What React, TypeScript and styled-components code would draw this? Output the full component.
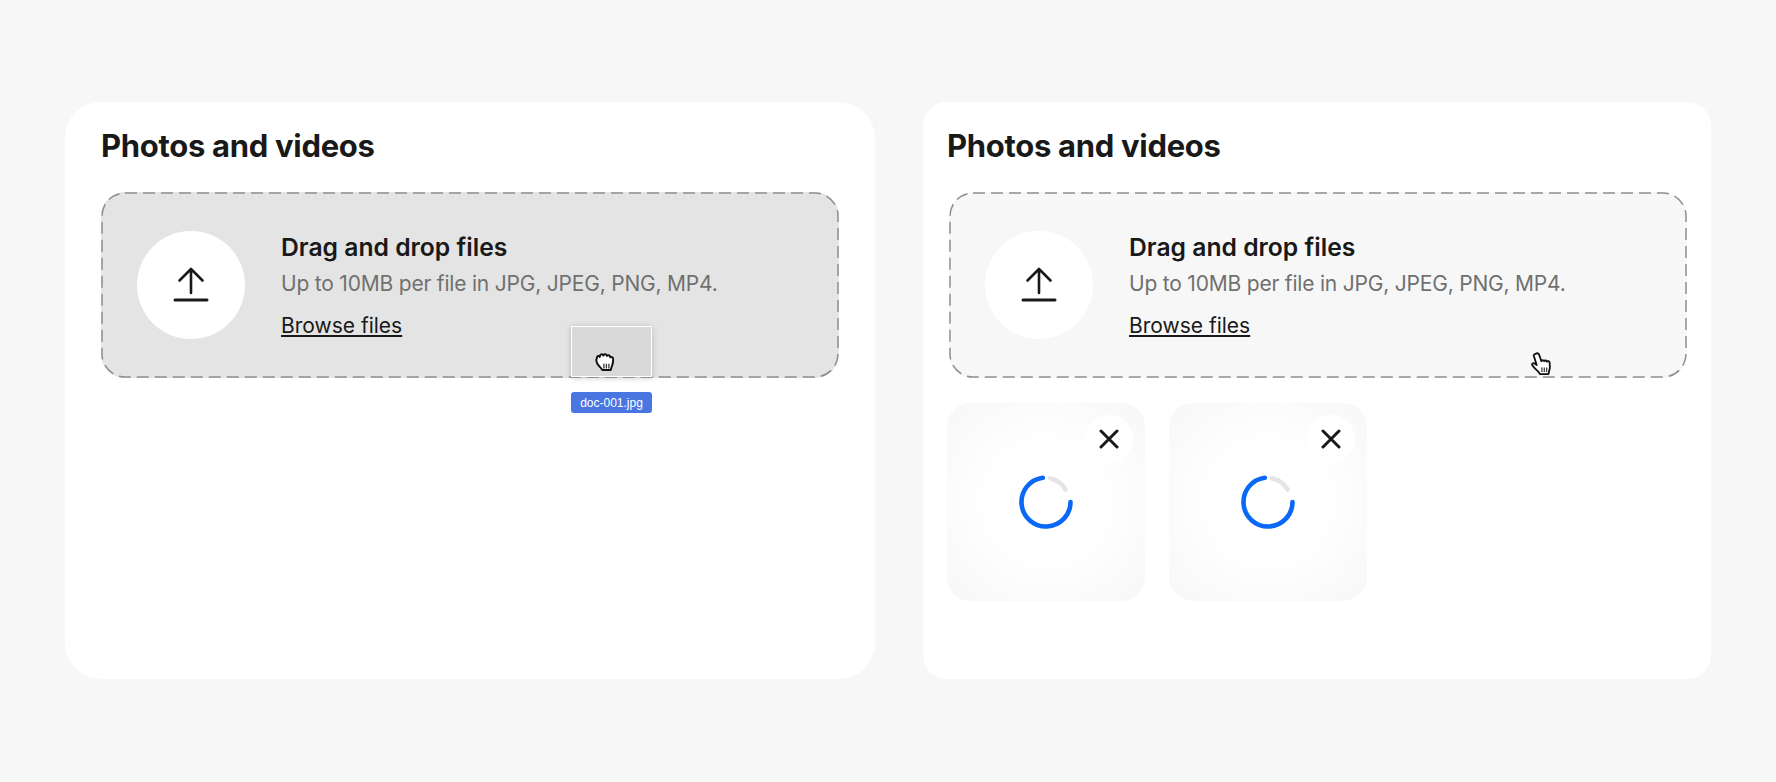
import styled, { createGlobalStyle } from 'styled-components';

const GlobalStyle = createGlobalStyle`
  html, body {
    margin: 0;
    padding: 0;
    background: #f7f7f7;
  }
  * {
    box-sizing: border-box;
  }
`;

function UploadIcon() {
  return (
    <svg width="36" height="36" viewBox="0 0 36 36" fill="none" stroke="#191919" strokeLinecap="round" strokeLinejoin="round">
      <path d="M18 26V2M6.500 13.500L18 2l11.500 11.500" strokeWidth="2.600" />
      <path d="M2 33h32" strokeWidth="3" />
    </svg>
  );
}

function CloseIcon() {
  return (
    <svg width="20" height="20" viewBox="0 0 20 20" fill="none" stroke="#191919" strokeWidth="3" strokeLinecap="round">
      <path d="M2 2l16 16M18 2L2 18" />
    </svg>
  );
}

function Spinner() {
  return (
    <svg width="56" height="56" viewBox="0 0 56 56" fill="none" strokeWidth="4.600" strokeLinecap="round">
      <path d="M32.200 4.200A24.500 24.500 0 0 1 47.600 15.500" stroke="#e5e5e5" />
      <path d="M24.800 3.700A24.500 24.500 0 1 0 52.500 28" stroke="#0968f6" />
    </svg>
  );
}

function GrabHand() {
  return (
    <svg width="26" height="26" viewBox="0 0 24 24">
      <path
        d="M4.500 8c.2-1.800 2-1.900 2.700-.7-.1-2.500 2.400-3.300 3.300-1.200.6-1.900 3-1.600 3.300.3 1.100-1.300 3.100-.6 3 1.300 1-.7 2.700-.2 2.700 1.500.1 2-.3 4.500-1 6.300-.4 1.200-.9 2.500-1.200 3.800H9.500c-.7-1.500-2.100-2.500-3.300-3.900-1.200-1.400-2-3.100-2.200-4.700-.1-.7 0-1.400.5-2z"
        fill="#fff"
        stroke="#111"
        strokeWidth="1.800"
        strokeLinejoin="round"
      />
      <path d="M11 13.500V18M13.300 13.500V18M15.600 13.500V18" stroke="#333" strokeWidth="1.200" />
    </svg>
  );
}

function PointHand() {
  return (
    <svg width="26" height="30" viewBox="0 0 24 28">
      <path
        d="M5.500 2.500c1.200-.9 2.500-.2 2.900 1l2.100 6c.3-1.300 2.200-1.300 2.600.1.400-1.100 2.300-1 2.600.4.500-.9 2.300-.6 2.500.8.200 2 .4 4.500-.1 6.500-.3 1.300-.8 2.500-1 4.200h-8c-.6-1.500-1.700-2.500-3-3.700-1.200-1.100-3.200-3-4.200-4.700-.6-1.100.8-2.400 2.200-1.500l2 1.500-2.200-7c-.4-1.100-.9-2-.4-2.600z"
        fill="#fff"
        stroke="#111"
        strokeWidth="1.700"
        strokeLinejoin="round"
      />
      <path d="M11 15.500v4M13.200 15.500v4M15.400 15.500v4" stroke="#333" strokeWidth="1.100" />
    </svg>
  );
}

interface DropZoneProps {
  active?: boolean;
  children?: React.ReactNode;
}

function DropZone({ active, children }: DropZoneProps) {
  return (
    <Zone $active={active}>
      <DashedFrame>
        <rect x="1" y="1" width="calc(100% - 2px)" height="calc(100% - 2px)" rx="23" ry="23" />
      </DashedFrame>
      <IconCircle>
        <UploadIcon />
      </IconCircle>
      <ZoneText>
        <ZoneTitle>Drag and drop files</ZoneTitle>
        <ZoneHint>Up to 10MB per file in JPG, JPEG, PNG, MP4.</ZoneHint>
        <BrowseLink>Browse files</BrowseLink>
      </ZoneText>
      {children}
    </Zone>
  );
}

function Thumb() {
  return (
    <ThumbCard>
      <CloseButton>
        <CloseIcon />
      </CloseButton>
      <Spinner />
    </ThumbCard>
  );
}

export default function App() {
  return (
    <Page>
      <GlobalStyle />
      <LeftCard>
        <Title>Photos and videos</Title>
        <DropZone active>
          <DragGhost>
            <GrabWrap>
              <GrabHand />
            </GrabWrap>
          </DragGhost>
          <FileLabel>doc-001.jpg</FileLabel>
        </DropZone>
      </LeftCard>
      <RightCard>
        <Title>Photos and videos</Title>
        <RightZone>
          <DropZone>
            <PointWrap>
              <PointHand />
            </PointWrap>
          </DropZone>
        </RightZone>
        <ThumbRow>
          <Thumb />
          <Thumb />
        </ThumbRow>
      </RightCard>
    </Page>
  );
}

const Page = styled.div`
  width: 1776px;
  height: 782px;
  padding: 102px 65px 0;
  display: flex;
  gap: 48px;
  background: #f7f7f7;
  font-family: Inter, 'Liberation Sans', sans-serif;
  color: #191919;
`;

const LeftCard = styled.section`
  width: 810px;
  height: 577px;
  padding: 26px 36px;
  background: #fff;
  border-radius: 36px;
`;

const RightCard = styled.section`
  width: 788px;
  height: 577px;
  padding: 26px 24px;
  background: #fff;
  border-radius: 24px;
`;

const Title = styled.h2`
  margin: 0 0 28px;
  font-size: 31px;
  line-height: 36px;
  font-weight: 700;
  letter-spacing: -0.3px;
`;

const RightZone = styled.div`
  margin-left: 2px;
`;

const Zone = styled.div<{ $active?: boolean }>`
  position: relative;
  width: 738px;
  height: 186px;
  padding: 0 36px;
  display: flex;
  align-items: center;
  gap: 36px;
  border-radius: 24px;
  background: ${(p) => (p.$active ? '#e4e4e4' : '#f7f7f7')};
`;

const DashedFrame = styled.svg`
  position: absolute;
  inset: 0;
  width: 100%;
  height: 100%;
  fill: none;
  stroke: #8f8f8f;
  stroke-width: 1.5;
  stroke-dasharray: 12 6;
  pointer-events: none;
`;

const IconCircle = styled.div`
  width: 108px;
  height: 108px;
  flex-shrink: 0;
  display: flex;
  align-items: center;
  justify-content: center;
  border-radius: 50%;
  background: #fff;
`;

const ZoneText = styled.div`
  display: flex;
  flex-direction: column;
  align-items: flex-start;
`;

const ZoneTitle = styled.div`
  font-size: 24.7px;
  line-height: 32px;
  font-weight: 600;
`;

const ZoneHint = styled.div`
  margin-top: 7px;
  font-size: 21px;
  line-height: 28px;
  color: #707070;
  letter-spacing: -0.2px;
`;

const BrowseLink = styled.a`
  margin-top: 14px;
  font-size: 21px;
  line-height: 28px;
  color: #191919;
  text-decoration: underline;
`;

const DragGhost = styled.div`
  position: absolute;
  left: 470px;
  top: 134px;
  width: 81px;
  height: 51px;
  background: #d9d9d9;
  border: 1.5px solid #fff;
  box-shadow: 0 1px 6px rgba(0, 0, 0, 0.2);
`;

const GrabWrap = styled.div`
  position: absolute;
  left: 20px;
  top: 22px;
  line-height: 0;
`;

const FileLabel = styled.div`
  position: absolute;
  left: 470px;
  top: 200px;
  width: 81px;
  height: 21px;
  display: flex;
  align-items: center;
  justify-content: center;
  border-radius: 3px;
  background: #4a76e2;
  color: #fff;
  font-family: 'Liberation Sans', Arial, sans-serif;
  font-size: 12px;
`;

const PointWrap = styled.div`
  position: absolute;
  left: 581px;
  top: 159px;
  line-height: 0;
`;

const ThumbRow = styled.div`
  margin-top: 25px;
  display: flex;
  gap: 24px;
`;

const ThumbCard = styled.div`
  position: relative;
  width: 198px;
  height: 198px;
  display: flex;
  align-items: center;
  justify-content: center;
  border-radius: 24px;
  background: radial-gradient(circle at center, #fff 0%, #fff 40%, #f7f7f7 100%);
`;

const CloseButton = styled.button`
  position: absolute;
  top: 12px;
  right: 12px;
  width: 48px;
  height: 48px;
  padding: 0;
  display: flex;
  align-items: center;
  justify-content: center;
  border: none;
  border-radius: 50%;
  background: #fff;
`;
